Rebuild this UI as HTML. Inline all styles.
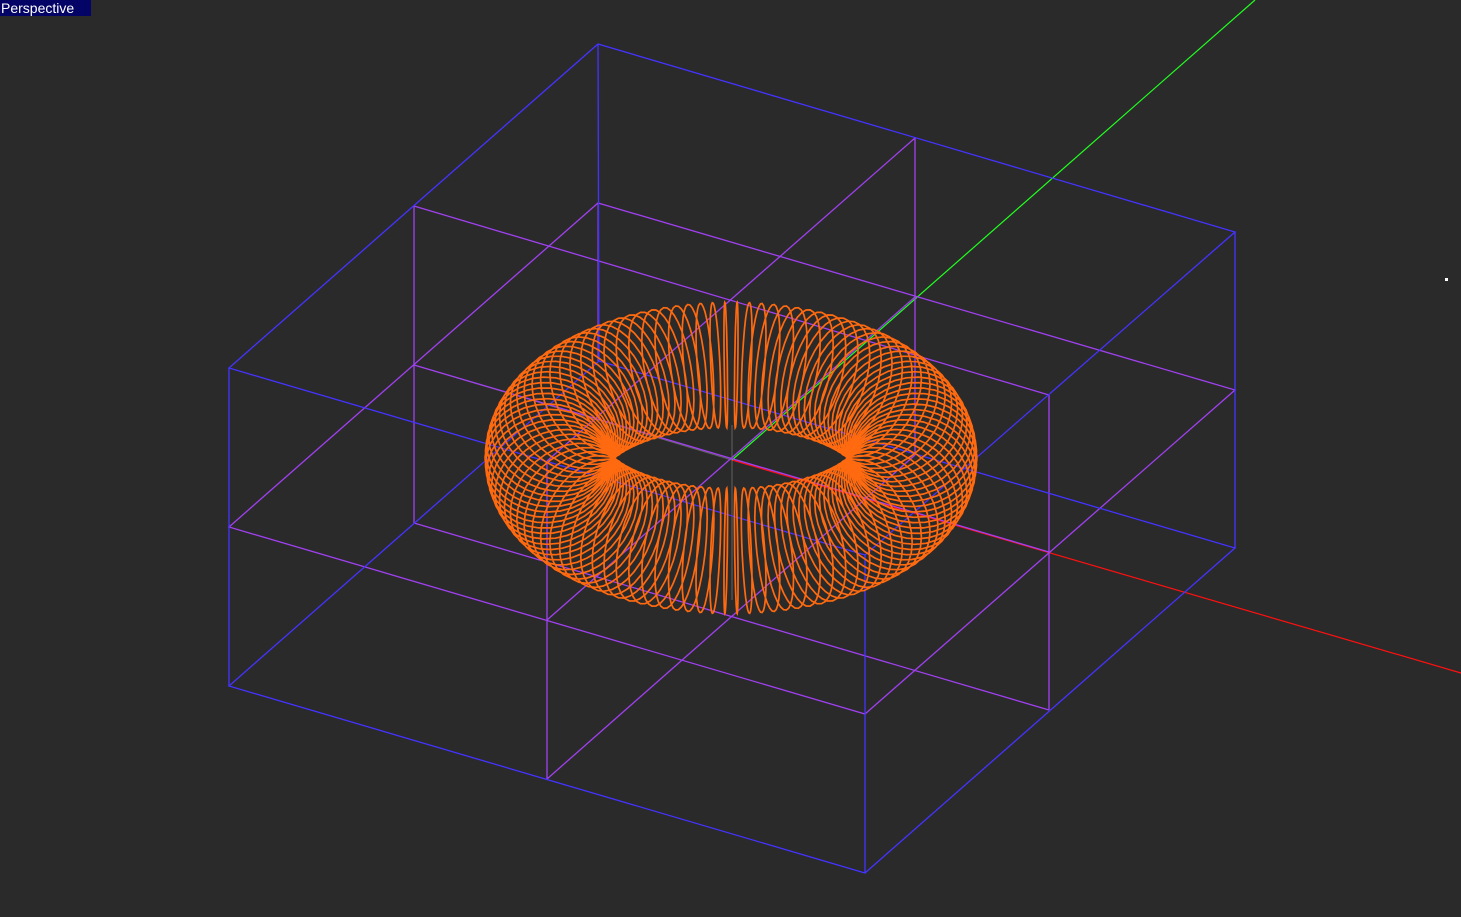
<!DOCTYPE html>
<html><head><meta charset="utf-8"><style>
html,body{margin:0;padding:0;background:#2a2a2a;width:1461px;height:917px;overflow:hidden}
#lab{position:absolute;left:0;top:0;width:91px;height:16px;background:#040466;color:#fff;font:14px/16px "Liberation Sans",sans-serif;padding-left:1px;box-sizing:border-box}
svg{position:absolute;left:0;top:0}
</style></head><body>
<svg width="1461" height="917" viewBox="0 0 1461 917">
<g stroke="#9a9a9a" stroke-width="1" fill="none" opacity="0.5">
<line x1="732" y1="425" x2="732" y2="600"/>
<line x1="414" y1="365" x2="732" y2="460"/>
</g>
<line x1="732" y1="460" x2="1461" y2="673" stroke="#ff1010" stroke-width="1.2"/>
<line x1="732" y1="460" x2="1255" y2="0" stroke="#20ff20" stroke-width="1.2"/>
<g stroke="#a040f0" stroke-width="1.3" fill="none">
<line x1="414" y1="206" x2="414" y2="523"/>
<line x1="915" y1="138" x2="915" y2="455"/>
<line x1="1049" y1="395" x2="1049" y2="710"/>
<line x1="547" y1="461" x2="547" y2="779"/>
<polygon points="229,527 598,203 1235,390 865,714"/>
<line x1="414" y1="206" x2="1049" y2="395"/>
<line x1="915" y1="138" x2="547" y2="461"/>
<line x1="414" y1="523" x2="1049" y2="710"/>
<line x1="915" y1="455" x2="547" y2="779"/>
<line x1="414" y1="365" x2="1049" y2="552"/>
<line x1="915" y1="297" x2="547" y2="620"/>
<line x1="598" y1="203" x2="598" y2="361" opacity="0.8"/>
</g>
<g stroke="#4433ff" stroke-width="1.3" fill="none">
<polygon points="229,368 598,44 1235,232 865,555"/>
<polygon points="229,686 599,361 1235,548 865,873"/>
<line x1="229" y1="368" x2="229" y2="686"/>
<line x1="598" y1="44" x2="599" y2="361"/>
<line x1="1235" y1="232" x2="1235" y2="548"/>
<line x1="865" y1="555" x2="865" y2="873"/>
</g>
<path id="tor" stroke="#ff6a10" stroke-width="1.7" fill="none" d=""/>
<rect x="1445" y="278" width="3" height="3" fill="#fff"/>
</svg>
<div id="lab">Perspective</div>
<script>
var cx=731,cy=458,A=183,B=93,k=0.344,H=54,d="";
for(var i=0;i<110;i++){var t=i/110*Math.PI*2;
for(var j=0;j<=32;j++){var p=j/32*Math.PI*2;
var x=cx+A*Math.cos(t)*(1+k*Math.cos(p)),y=cy+B*Math.sin(t)*(1+k*Math.cos(p))-H*Math.sin(p);
d+=(j?"L":"M")+x.toFixed(1)+" "+y.toFixed(1);}}
document.getElementById("tor").setAttribute("d",d);
</script>
</body></html>
